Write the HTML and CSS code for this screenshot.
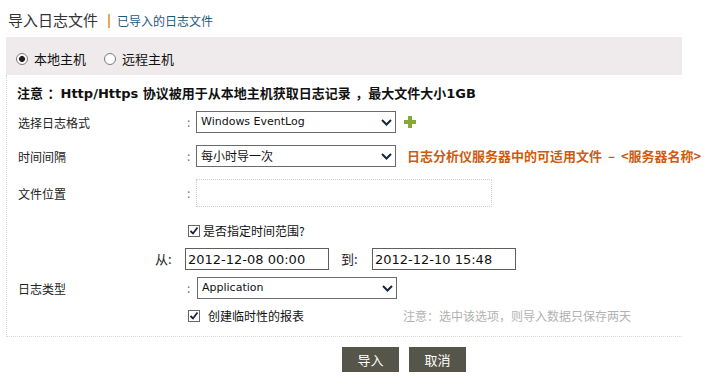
FILE: index.html
```html
<!DOCTYPE html>
<html lang="zh">
  <head>
    <meta charset="utf-8" />
    <title>导入日志文件</title>
    <link rel="stylesheet" href="styles.css">
  </head>
  <body>
    <div class="tabs">
      <span class="tab-title">导入日志文件</span>
      <span class="tab-sep"></span>
      <a class="tab-link" href="#">已导入的日志文件</a>
    </div>

    <div class="source-bar">
      <label class="radio"><span class="radio-dot checked"></span>本地主机</label>
      <label class="radio"><span class="radio-dot"></span>远程主机</label>
    </div>

    <form class="import-form">
      <p class="note">注意 ：Http/Https 协议被用于从本地主机获取日志记录 ，最大文件大小1GB</p>

      <div class="row">
        <span class="label">选择日志格式</span>
        <span class="colon">:</span>
        <div class="select latin">
          <span>Windows EventLog</span>
          <svg width="11" height="7" viewBox="0 0 11 7"><path d="M1 1l4.5 4.5L10 1" fill="none" stroke="#17263a" stroke-width="2"/></svg>
        </div>
        <svg class="plus" width="12" height="12" viewBox="0 0 12 12"><path d="M4 0h4v4h4v4H8v4H4V8H0V4h4z" fill="#86a838"/></svg>
      </div>

      <div class="row">
        <span class="label">时间间隔</span>
        <span class="colon">:</span>
        <div class="select">
          <span>每小时导一次</span>
          <svg width="11" height="7" viewBox="0 0 11 7"><path d="M1 1l4.5 4.5L10 1" fill="none" stroke="#17263a" stroke-width="2"/></svg>
        </div>
        <span class="hint-orange">日志分析仪服务器中的可适用文件 &nbsp;–&nbsp; &lt;服务器名称&gt;</span>
      </div>

      <div class="row row-location">
        <span class="label">文件位置</span>
        <span class="colon">:</span>
        <input class="path-input" type="text" />
      </div>

      <label class="check-row range-check">
        <span class="checkbox"><svg width="10" height="10" viewBox="0 0 10 10"><path d="M1.5 5l2.5 2.5L8.5 1.5" fill="none" stroke="#1b2238" stroke-width="1.8"/></svg></span>
        是否指定时间范围?
      </label>

      <div class="range-row">
        <span class="range-label">从:</span>
        <input class="date-input" type="text" value="2012-12-08 00:00" />
        <span class="range-label to">到:</span>
        <input class="date-input" type="text" value="2012-12-10 15:48" />
      </div>

      <div class="row row-type">
        <span class="label">日志类型</span>
        <span class="colon">:</span>
        <div class="select latin">
          <span>Application</span>
          <svg width="11" height="7" viewBox="0 0 11 7"><path d="M1 1l4.5 4.5L10 1" fill="none" stroke="#17263a" stroke-width="2"/></svg>
        </div>
      </div>

      <div class="check-row temp-row">
        <label class="temp-check">
          <span class="checkbox"><svg width="10" height="10" viewBox="0 0 10 10"><path d="M1.5 5l2.5 2.5L8.5 1.5" fill="none" stroke="#1b2238" stroke-width="1.8"/></svg></span>
          创建临时性的报表
        </label>
        <span class="hint-gray">注意：选中该选项，则导入数据只保存两天</span>
      </div>
    </form>

    <div class="actions">
      <button class="btn" type="button">导入</button>
      <button class="btn" type="button">取消</button>
    </div>
  </body>
</html>
```

FILE: styles.css
```css
* {
  box-sizing: border-box;
}

body {
  margin: 0;
  font-family: "Noto Sans CJK SC", sans-serif;
  font-size: 12px;
  line-height: 16px;
  color: #222;
  background: #fff;
}

/* top tabs */
.tabs {
  display: flex;
  align-items: center;
  height: 37px;
  padding: 2px 0 0 8px;
}

.tab-title {
  font-size: 15px;
  color: #333;
}

.tab-sep {
  width: 2px;
  height: 14px;
  margin: 2px 7px 0 10px;
  background: #f0a65a;
}

.tab-link {
  margin-top: 2px;
  font-size: 12px;
  color: #1d5a7e;
  text-decoration: none;
}

/* local / remote switch */
.source-bar {
  display: flex;
  gap: 18px;
  width: 676px;
  height: 38px;
  margin-left: 6px;
  padding: 16px 0 0 10px;
  background: #efebec;
}

.radio {
  display: flex;
  align-items: center;
  gap: 6px;
  height: 12px;
  font-size: 13px;
  color: #111;
}

.radio-dot {
  width: 12px;
  height: 12px;
  border: 1px solid #7c7c7c;
  border-radius: 50%;
  background: #fdfdfd;
}

.radio-dot.checked {
  background: radial-gradient(circle, #1e1e1e 0 2.6px, #9a9a9a 3px, #fdfdfd 3.6px);
}

/* form body */
.import-form {
  width: 676px;
  height: 262px;
  margin: 0 0 0 6px;
  padding: 9px 0 0 10px;
  border-left: 1px dotted #cfd8cf;
  border-bottom: 1px dotted #d3dcd3;
}

.note {
  margin: 0 0 7px;
  height: 20px;
  line-height: 20px;
  font-family: "DejaVu Sans", "Noto Sans CJK SC", sans-serif;
  font-size: 13px;
  font-weight: bold;
  color: #111;
}

.row {
  display: flex;
  align-items: center;
  height: 22px;
  margin: 0 0 12px 1px;
  white-space: nowrap;
}

.label {
  flex-shrink: 0;
  width: 169px;
  padding-top: 1px;
  color: #222;
}

.colon {
  flex-shrink: 0;
  width: 9px;
  color: #777;
}

.select {
  flex-shrink: 0;
  display: flex;
  align-items: center;
  justify-content: space-between;
  width: 200px;
  height: 22px;
  padding: 0 3px 0 4px;
  border: 1px solid #6a6a6a;
  background: #fff;
  font-size: 12px;
  color: #111;
}

.select.latin {
  font-family: "DejaVu Sans", sans-serif;
  font-size: 11px;
}

.plus {
  flex-shrink: 0;
  margin-left: 8px;
}

.hint-orange {
  margin-left: 11px;
  font-size: 13px;
  font-weight: bold;
  color: #cd5c10;
}

.row-location {
  height: 28px;
  margin-bottom: 16px;
}

.path-input {
  flex-shrink: 0;
  width: 296px;
  height: 28px;
  border: 1px dotted #cdcdcd;
  outline: none;
}

.check-row {
  display: flex;
  align-items: center;
  height: 16px;
  padding-left: 171px;
  color: #111;
}

.range-check {
  gap: 3px;
  font-size: 12px;
  margin-bottom: 9px;
}

.checkbox {
  display: flex;
  align-items: center;
  justify-content: center;
  width: 12px;
  height: 12px;
  border: 1px solid #666;
  background: #fff;
}

.range-row {
  display: flex;
  align-items: center;
  height: 22px;
  margin-bottom: 7px;
  padding-left: 138px;
}

.range-label {
  width: 30px;
  font-size: 13px;
}

.range-label.to {
  width: 31px;
  margin-left: 12px;
}

.date-input {
  width: 144px;
  height: 22px;
  padding: 0 2px;
  border: 1px solid #5e5e5e;
  font-family: "DejaVu Sans", sans-serif;
  font-size: 13px;
  color: #111;
  outline: none;
}

.row-type {
  margin-bottom: 9px;
}

.row-type .select {
  margin-left: 1px;
}

.temp-check {
  display: flex;
  align-items: center;
  gap: 8px;
  width: 215px;
}

.hint-gray {
  color: #b2b2b2;
}

/* buttons */
.actions {
  display: flex;
  gap: 10px;
  padding: 10px 0 0 342px;
}

.btn {
  width: 57px;
  height: 25px;
  border: 0;
  background: #55554a;
  color: #fff;
  font-family: "Noto Sans CJK SC", sans-serif;
  font-size: 13px;
}
```
